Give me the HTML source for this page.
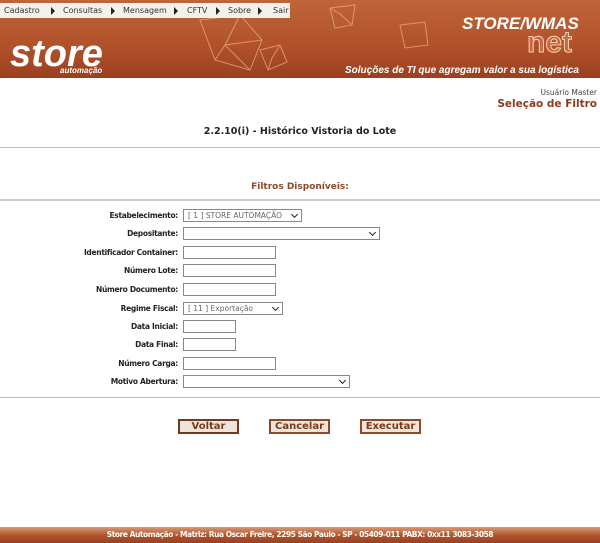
<!DOCTYPE html>
<html><head><meta charset="utf-8"><style>
body{margin:0;width:600px;height:543px;position:relative;background:#fff;font-family:Verdana,"DejaVu Sans",sans-serif;overflow:hidden}
.hdr{position:absolute;left:0;top:0;width:600px;height:78px;background:linear-gradient(180deg,#c0643a 0%,#b0512a 60%,#9a4020 100%)}
.menu{position:absolute;left:0;top:3px;width:290px;height:15px;background:#f4f0ea;font-size:8px;color:#333;line-height:15px}
.menu span{position:absolute;top:0}
.tri{width:0;height:0;border-top:4px solid transparent;border-bottom:4px solid transparent;border-left:4px solid #222;position:absolute;top:4px}
.lbl{position:absolute;right:422px;font-size:7.5px;letter-spacing:-0.3px;font-weight:bold;color:#222;white-space:nowrap}
.in{position:absolute;left:183px;height:13px;border:1px solid #888;background:#fff;box-sizing:border-box;font-size:7.5px;color:#666;line-height:12px;padding-left:4px}
.in.s::after{content:"";position:absolute;right:4px;top:2px;width:4px;height:4px;border-right:1.5px solid #222;border-bottom:1.5px solid #222;transform:rotate(45deg)}
.btn{position:absolute;top:419px;height:15px;width:61px;box-sizing:border-box;border:2px solid #6b3a22;background:#efe4da;font-size:10px;font-weight:bold;color:#7a3b1a;text-align:center;line-height:11px}
.line{position:absolute;left:0;width:600px;height:1px;background:#bbb}
</style></head><body>
<div class="hdr">
 <svg width="600" height="78" style="position:absolute;left:0;top:0">
  <g stroke="#e8b090" stroke-width="1" fill="none" opacity="0.7">
   <path d="M200 20 L240 15 L262 40 L250 70 L215 60 Z M240 15 L225 45 L250 70 M262 40 L225 45 L215 60"/>
   <path d="M260 50 L280 45 L287 62 L268 70 Z M280 45 L272 58 L268 70"/>
   <path d="M330 8 L355 5 L352 25 L335 28 Z M330 8 L340 14 L352 25"/>
   <path d="M400 25 L425 22 L428 45 L405 48 Z"/>
  </g>
  <text x="10" y="66" font-family="Liberation Sans,sans-serif" font-size="38" font-weight="bold" font-style="italic" fill="#fff">store</text>
  <text x="60" y="73" font-family="Liberation Sans,sans-serif" font-size="8" font-weight="bold" font-style="italic" fill="#fff">automação</text>
  <text x="462" y="29" font-family="Liberation Sans,sans-serif" font-size="17" font-weight="bold" font-style="italic" fill="#fff">STORE/WMAS</text>
  <text x="527" y="52" font-family="Liberation Sans,sans-serif" font-size="30" font-weight="bold" fill="#c86a40" stroke="#f6d0b8" stroke-width="1">net</text>
  <text x="345" y="73" font-family="Liberation Sans,sans-serif" font-size="10" font-weight="bold" font-style="italic" fill="#fff">Soluções de TI que agregam valor a sua logística</text>
 </svg>
 <div class="menu">
  <span style="left:4px">Cadastro</span><div class="tri" style="left:51px"></div>
  <span style="left:63px">Consultas</span><div class="tri" style="left:111px"></div>
  <span style="left:123px">Mensagem</span><div class="tri" style="left:174px"></div>
  <span style="left:187px">CFTV</span><div class="tri" style="left:216px"></div>
  <span style="left:228px">Sobre</span><div class="tri" style="left:258px"></div>
  <span style="left:273px">Sair</span>
 </div>
</div>
<div style="position:absolute;right:3px;top:88px;font-size:7.5px;color:#444">Usuário Master</div>
<div style="position:absolute;right:3px;top:98px;font-size:10.5px;font-weight:bold;color:#8b3a1a">Seleção de Filtro</div>
<div style="position:absolute;left:0;width:600px;top:126px;text-align:center;font-size:9.5px;font-weight:bold;color:#222">2.2.10(i) - Histórico Vistoria do Lote</div>
<div class="line" style="top:147px"></div>
<div style="position:absolute;left:0;width:600px;top:182px;text-align:center;font-size:9px;font-weight:bold;color:#8b4a2a">Filtros Disponíveis:</div>
<div class="line" style="top:199px;height:2px;background:#ccc"></div>

<div class="lbl" style="top:211px">Estabelecimento:</div><div class="in s" style="top:209px;width:119px">[ 1 ] STORE AUTOMAÇÃO</div>
<div class="lbl" style="top:229px">Depositante:</div><div class="in s" style="top:227px;width:197px"></div>
<div class="lbl" style="top:248px">Identificador Container:</div><div class="in" style="top:246px;width:93px"></div>
<div class="lbl" style="top:266px">Número Lote:</div><div class="in" style="top:264px;width:93px"></div>
<div class="lbl" style="top:285px">Número Documento:</div><div class="in" style="top:283px;width:93px"></div>
<div class="lbl" style="top:304px">Regime Fiscal:</div><div class="in s" style="top:302px;width:100px">[ 11 ] Exportação</div>
<div class="lbl" style="top:322px">Data Inicial:</div><div class="in" style="top:320px;width:53px"></div>
<div class="lbl" style="top:340px">Data Final:</div><div class="in" style="top:338px;width:53px"></div>
<div class="lbl" style="top:359px">Número Carga:</div><div class="in" style="top:357px;width:93px"></div>
<div class="lbl" style="top:377px">Motivo Abertura:</div><div class="in s" style="top:375px;width:167px"></div>
<div class="line" style="top:397px"></div>

<div class="btn" style="left:178px">Voltar</div>
<div class="btn" style="left:269px;border-color:#8b4a2a">Cancelar</div>
<div class="btn" style="left:360px;border-color:#8b4a2a">Executar</div>

<div style="position:absolute;left:0;top:527px;width:600px;height:16px;background:linear-gradient(180deg,#d89a78 0%,#b0552c 50%,#9a4020 100%);color:#fff;font-size:7.5px;letter-spacing:-0.45px;font-weight:bold;text-align:center;line-height:16px">Store Automação - Matriz: Rua Oscar Freire, 2295 São Paulo - SP - 05409-011 PABX: 0xx11 3083-3058</div>
</body></html>
